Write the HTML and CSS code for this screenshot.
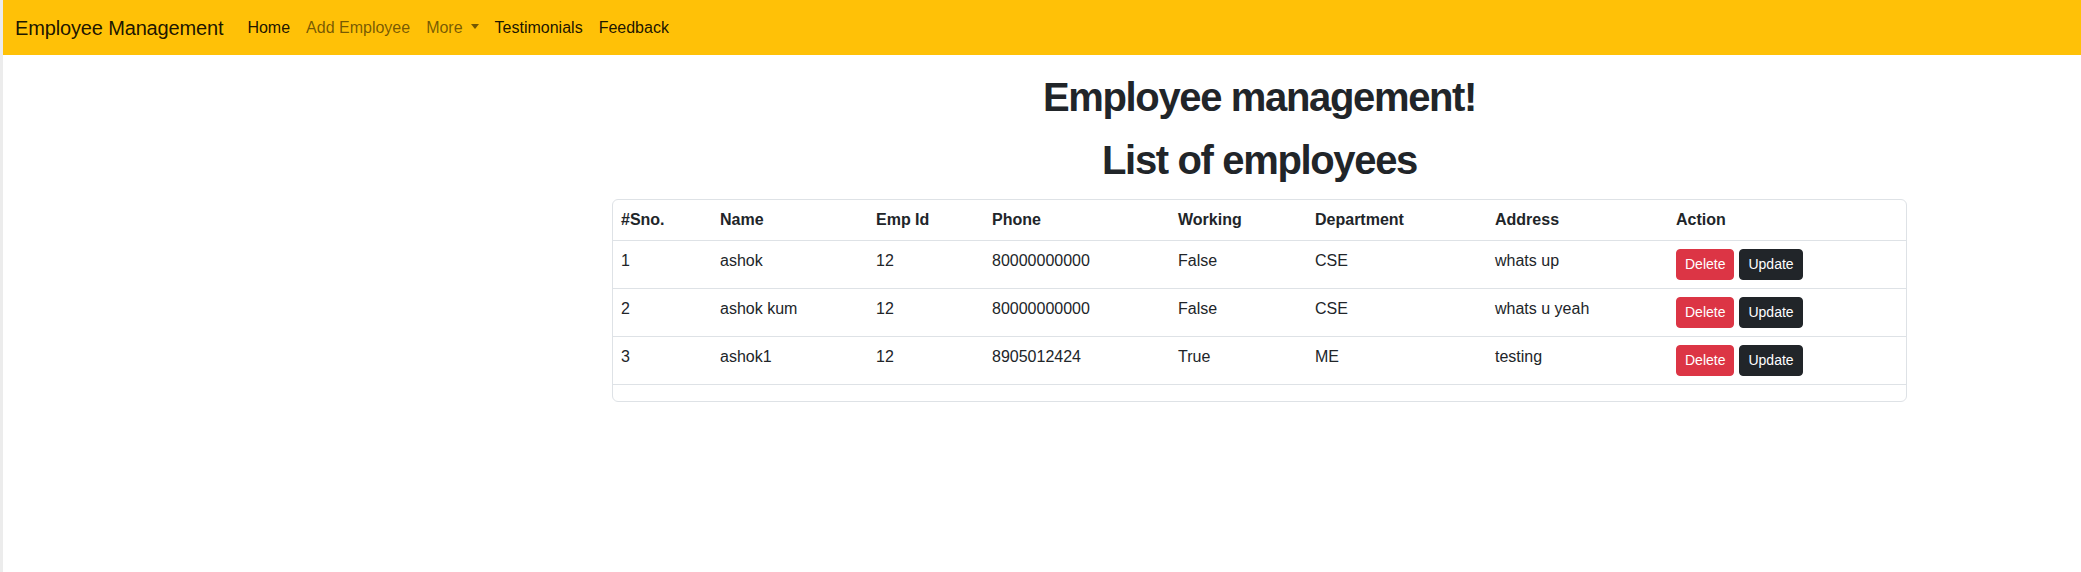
FILE: index.html
```html
<!DOCTYPE html>
<html lang="en">
<head>
<meta charset="utf-8">
<title>Employee Management</title>
<link rel="stylesheet" href="styles.css">
</head>
<body>
<nav class="navbar">
  <a class="brand" href="#">Employee Management</a>
  <ul class="nav">
    <li><a class="nav-link active" href="#">Home</a></li>
    <li><a class="nav-link" href="#">Add Employee</a></li>
    <li><a class="nav-link dropdown-toggle" href="#">More</a></li>
    <li><a class="nav-link active" href="#">Testimonials</a></li>
    <li><a class="nav-link active" href="#">Feedback</a></li>
  </ul>
</nav>
<main class="main">
  <h1 class="title">Employee management!</h1>
  <h1 class="title">List of employees</h1>
  <div class="table-wrap">
    <table class="emp-table">
      <thead>
        <tr>
          <th>#Sno.</th>
          <th>Name</th>
          <th>Emp Id</th>
          <th>Phone</th>
          <th>Working</th>
          <th>Department</th>
          <th>Address</th>
          <th>Action</th>
        </tr>
      </thead>
      <tbody>
        <tr>
          <td>1</td>
          <td>ashok</td>
          <td>12</td>
          <td>80000000000</td>
          <td>False</td>
          <td>CSE</td>
          <td>whats up</td>
          <td><div class="actions"><button class="btn btn-danger">Delete</button><button class="btn btn-dark">Update</button></div></td>
        </tr>
        <tr>
          <td>2</td>
          <td>ashok kum</td>
          <td>12</td>
          <td>80000000000</td>
          <td>False</td>
          <td>CSE</td>
          <td>whats u yeah</td>
          <td><div class="actions"><button class="btn btn-danger">Delete</button><button class="btn btn-dark">Update</button></div></td>
        </tr>
        <tr>
          <td>3</td>
          <td>ashok1</td>
          <td>12</td>
          <td>8905012424</td>
          <td>True</td>
          <td>ME</td>
          <td>testing</td>
          <td><div class="actions"><button class="btn btn-danger">Delete</button><button class="btn btn-dark">Update</button></div></td>
        </tr>
      </tbody>
    </table>
  </div>
</main>
</body>
</html>
```
FILE: styles.css
```css
* {
  box-sizing: border-box;
}

html, body {
  height: 100%;
}

body {
  margin: 0;
  border-left: 3px solid #ececec;
  background: #ffffff;
  color: #212529;
  font-family: "Liberation Sans", Arial, sans-serif;
  font-size: 16px;
  line-height: 1.5;
}

/* Navbar */
.navbar {
  display: flex;
  align-items: center;
  height: 55px;
  padding: 0 12px;
  background: #ffc107;
}

.brand {
  font-size: 20px;
  line-height: 30px;
  margin-right: 16px;
  color: rgba(0, 0, 0, 0.9);
  text-decoration: none;
  letter-spacing: -0.15px;
}

.nav {
  display: flex;
  align-items: center;
  list-style: none;
  margin: 0;
  padding: 0;
}

.nav-link {
  display: block;
  padding: 0 8px;
  line-height: 24px;
  color: rgba(0, 0, 0, 0.55);
  text-decoration: none;
}

.nav-link.active {
  color: rgba(0, 0, 0, 0.9);
}

.dropdown-toggle::after {
  content: "";
  display: inline-block;
  margin-left: 8px;
  vertical-align: 4px;
  border-top: 5px solid;
  border-left: 4.5px solid transparent;
  border-right: 4.5px solid transparent;
  border-bottom: 0;
}

/* Main */
.main {
  margin: 0 174px 0 609px;
  padding-top: 18px;
}

.title {
  margin: 0 0 15px;
  font-size: 40px;
  line-height: 48px;
  font-weight: 700;
  letter-spacing: -1.35px;
  text-align: center;
  color: #212529;
}

.table-wrap {
  border: 1px solid #dee2e6;
  border-radius: 6px;
}

.emp-table {
  width: 100%;
  table-layout: fixed;
  border-collapse: collapse;
  margin-bottom: 16px;
  vertical-align: top;
}

.emp-table th,
.emp-table td {
  padding: 8px;
  text-align: left;
  vertical-align: top;
  border-bottom: 1px solid #dee2e6;
  white-space: nowrap;
}

.emp-table th {
  font-weight: 700;
}

.emp-table th:nth-child(1) { width: 99px; }
.emp-table th:nth-child(2) { width: 156px; }
.emp-table th:nth-child(3) { width: 116px; }
.emp-table th:nth-child(4) { width: 186px; }
.emp-table th:nth-child(5) { width: 137px; }
.emp-table th:nth-child(6) { width: 180px; }
.emp-table th:nth-child(7) { width: 181px; }
.emp-table th:nth-child(8) { width: 238px; }

.actions {
  display: flex;
  gap: 5px;
}

.btn {
  font-family: "Liberation Sans", Arial, sans-serif;
  font-size: 14px;
  line-height: 21px;
  padding: 4px 8px;
  border: 1px solid transparent;
  border-radius: 4px;
  color: #ffffff;
  cursor: pointer;
}

.btn-danger {
  background: #dc3545;
  border-color: #dc3545;
}

.btn-dark {
  background: #212529;
  border-color: #212529;
}
```
